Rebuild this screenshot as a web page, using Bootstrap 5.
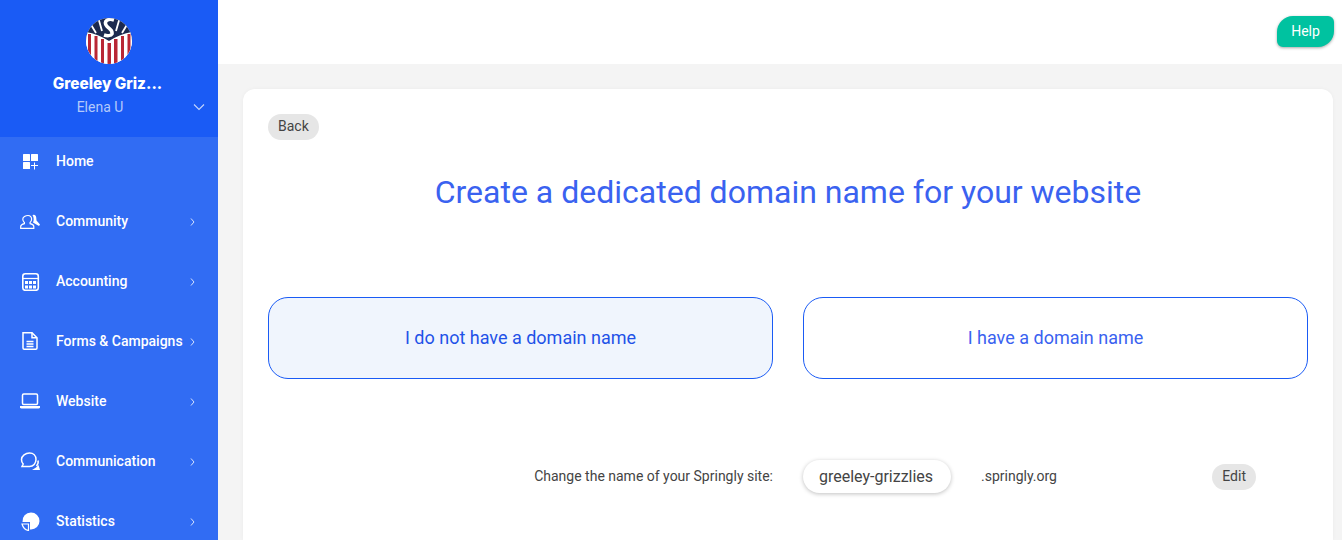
<!DOCTYPE html>
<html lang="en">
<head>
  <meta charset="UTF-8">
  <title>Domain name</title>
  <link href="https://cdn.jsdelivr.net/npm/bootstrap@5.3.0/dist/css/bootstrap.min.css" rel="stylesheet">
  <style>
    html, body { height: 540px; overflow: hidden; }
    body { font-family: Roboto, "Liberation Sans", sans-serif; background: #f4f4f4; color: #444; }
    .side-bar { width: 218px; height: 540px; background: #316cf3; color: #fff; overflow: hidden; }
    .side-head { height: 137px; background: #1a5bf5; padding-top: 17px; position: relative; }
    .club-logo { width: 46px; height: 48px; display: block; margin: 0 auto; }
    .club-name { font-family: Inter, "Liberation Sans", sans-serif; font-weight: 800; font-size: 15.3px; line-height: 20px; margin-top: 9px; text-align: center; margin-right: 3px; }
    .user-name { font-size: 14px; line-height: 18px; color: #b3c9fb; text-align: center; margin-top: 4px; margin-right: 18px; }
    .user-caret { position: absolute; left: 193px; top: 103px; width: 12px; height: 8px; }
    .menu-item { height: 60px; padding: 0 21px 0 20px; color: #fff; text-decoration: none; font-size: 14px; font-weight: 500; }
    .menu-first { height: 54px; padding-bottom: 6px; }
    .menu-last { height: 49px; padding-top: 11px; }
    .menu-icon { width: 20px; height: 20px; margin-right: 16px; flex: none; }
    .menu-arrow { width: 5px; height: 8px; flex: none; margin: 1px 2px 0 0; }
    .menu-label { white-space: nowrap; }
    .top-bar { height: 64px; background: #fff; padding: 16px 8px 0 0; }
    .help-btn { width: 57px; height: 31px; background: #00c2a0; color: #fff; font-size: 14px; border: 0; padding: 0; border-radius: 16px 6px 16px 6px; box-shadow: 0 1px 3px rgba(0,0,0,.35); }
    .content-wrap { padding: 25px 9px 0 25px; }
    .white-panel { background: #fff; border-radius: 12px 12px 0 0; height: 451px; padding: 25px; box-shadow: 0 0 4px rgba(0,0,0,.04); }
    .pill-btn { background: #e6e6e6; color: #444; border: 0; font-size: 14px; line-height: 18px; padding: 3px 10px 5px; border-radius: 13px; display: block; }
    .page-title { color: #3a62f0; font-size: 32px; font-weight: 400; line-height: 38px; text-align: center; margin: 33px 0 86px; }
    .choice-row { display: grid; grid-template-columns: 505px 505px; gap: 30px; }
    .choice-box { height: 82px; border: 1px solid #1a5bf5; border-radius: 20px; background: #fff; color: #3a62f0; font-size: 18px; padding-bottom: 2px; }
    .choice-on { background: #f0f5fd; color: #1f52e8; }
    .site-row { display: grid; grid-template-columns: 505px 148px 1fr; column-gap: 30px; margin-top: 81px; align-items: center; height: 33px; font-size: 14px; }
    .site-label { text-align: right; }
    .site-input { height: 33px; border-radius: 17px; background: #fff; box-shadow: 0 1px 4px rgba(0,0,0,.25); font-size: 16px; padding-right: 2px; }
    .site-edit { margin-right: 52px; }
  </style>
</head>
<body class="d-flex">
  <nav class="side-bar flex-shrink-0">
    <div class="side-head">
      <svg class="club-logo" viewBox="0 0 46 48">
        <defs><clipPath id="logoClip"><circle cx="23" cy="24" r="23"/></clipPath></defs>
        <g clip-path="url(#logoClip)">
          <rect width="46" height="48" fill="#fff"/>
          <rect y="0" width="46" height="24" fill="#1c2a4f"/>
          <path d="M4 6l6 10M12 0l4 14M34 0l-4 14M42 6l-6 10" stroke="#fff" stroke-width="1.800" fill="none"/>
          <path d="M28 3C22 1 18 4 20 8C22 12 27 12 26 17C25 19 21 19 18 18" stroke="#fff" stroke-width="3.500" fill="none"/>
          <path d="M0 15Q12 17 23 24Q34 17 46 15V48H0Z" fill="#fff"/>
          <g fill="#b92735">
            <rect x="2" y="17" width="3" height="31"/>
            <rect x="8.500" y="19" width="3" height="29"/>
            <rect x="15" y="22" width="3" height="26"/>
            <rect x="21.500" y="26" width="3.500" height="22"/>
            <rect x="28" y="22" width="3.500" height="26"/>
            <rect x="35" y="19" width="3" height="29"/>
            <rect x="41.500" y="17" width="3" height="31"/>
          </g>
        </g>
      </svg>
      <div class="club-name">Greeley Griz...</div>
      <div class="user-name">Elena U</div>
      <svg class="user-caret" viewBox="0 0 12 8"><path d="M1 1.500l5 5 5-5" stroke="#c5d6fc" stroke-width="1.100" fill="none"/></svg>
    </div>

    <a href="#" class="menu-item menu-first d-flex align-items-center">
      <svg class="menu-icon" viewBox="0 0 20 20" fill="#fff"><rect x="3" y="3" width="7" height="7" rx=".5"/><rect x="11" y="3" width="7" height="7" rx=".5"/><rect x="3" y="11" width="7" height="7" rx=".5"/><path d="M14 11.500h1V14h3v1h-3v3.500h-1V15h-3v-1h3z"/></svg>
      <span class="menu-label flex-grow-1">Home</span>
    </a>
    <a href="#" class="menu-item d-flex align-items-center">
      <svg class="menu-icon" viewBox="0 0 20 20" fill="none" stroke="#fff" stroke-width="1.200"><path d="M8 4.500c2.300 0 3.800 1.700 3.600 3.700-.1 1.500-.8 2.700-1.500 3.300v1.200c2 .5 3.700 1.300 3.700 2.800v1.800H.7v-1.800c0-1.500 1.800-2.300 3.700-2.800v-1.200c-.8-.6-1.500-1.800-1.600-3.300C2.600 6.200 5.700 4.500 8 4.500z"/><path d="M13 4c1.700-.5 3 .5 3.200 2.200l.3 3.300 3.500 4-1 1.500-3.500-2-2.500-1.500c1-2 1-5-.5-7.500z" fill="#fff" stroke="none"/></svg>
      <span class="menu-label flex-grow-1">Community</span>
      <svg class="menu-arrow" viewBox="0 0 5 8"><path d="M1 .5l3 3.500-3 3.500" stroke="#d5e1fd" stroke-width="1" fill="none"/></svg>
    </a>
    <a href="#" class="menu-item d-flex align-items-center">
      <svg class="menu-icon" viewBox="0 0 20 20"><rect x="2.800" y="2.800" width="15.500" height="16.500" rx="2.500" fill="none" stroke="#fff" stroke-width="1.600"/><path d="M3 7.500h15" stroke="#fff" stroke-width="1.200"/><g fill="#fff"><rect x="5" y="10" width="3" height="3"/><rect x="9" y="10" width="3" height="3"/><rect x="13" y="10" width="3" height="3"/><rect x="5" y="14.500" width="3" height="3"/><rect x="9" y="14.500" width="3" height="3"/><rect x="13" y="14.500" width="3" height="3"/></g></svg>
      <span class="menu-label flex-grow-1">Accounting</span>
      <svg class="menu-arrow" viewBox="0 0 5 8"><path d="M1 .5l3 3.500-3 3.500" stroke="#d5e1fd" stroke-width="1" fill="none"/></svg>
    </a>
    <a href="#" class="menu-item d-flex align-items-center">
      <svg class="menu-icon" viewBox="0 0 20 20" fill="none" stroke="#fff" stroke-width="1.500"><path d="M3 1.800h9l5 5V17a1.200 1.200 0 0 1-1.200 1.200H4.200A1.200 1.200 0 0 1 3 17z"/><path d="M12 1.800v5h5M6.500 10.500h7M6.500 13h7M6.500 15.500h7"/></svg>
      <span class="menu-label flex-grow-1">Forms &amp; Campaigns</span>
      <svg class="menu-arrow" viewBox="0 0 5 8"><path d="M1 .5l3 3.500-3 3.500" stroke="#d5e1fd" stroke-width="1" fill="none"/></svg>
    </a>
    <a href="#" class="menu-item d-flex align-items-center">
      <svg class="menu-icon" viewBox="0 0 20 20"><rect x="2.500" y="3" width="15" height="10.500" rx="1.200" fill="none" stroke="#fff" stroke-width="1.500"/><path d="M-.5 15h21c0 1.500-.8 2.500-2 2.500H1.500c-1.200 0-2-1-2-2.500z" fill="#fff"/></svg>
      <span class="menu-label flex-grow-1">Website</span>
      <svg class="menu-arrow" viewBox="0 0 5 8"><path d="M1 .5l3 3.500-3 3.500" stroke="#d5e1fd" stroke-width="1" fill="none"/></svg>
    </a>
    <a href="#" class="menu-item d-flex align-items-center">
      <svg class="menu-icon" viewBox="0 0 20 20" fill="none" stroke="#fff" stroke-width="1.500"><path d="M9.500 2c3.800 0 6.500 2.700 6.500 6.500s-2.700 7-6.500 7H2l1.200-2.500C2 11.800 1.500 10.300 1.500 8.500 1.500 4.700 5.700 2 9.500 2z"/><path d="M18 9.500c.5 2-.1 4-1.500 5.500"/><path d="M12 19h8l-1.500-5-2.500 2.500z" fill="#fff" stroke="none"/></svg>
      <span class="menu-label flex-grow-1">Communication</span>
      <svg class="menu-arrow" viewBox="0 0 5 8"><path d="M1 .5l3 3.500-3 3.500" stroke="#d5e1fd" stroke-width="1" fill="none"/></svg>
    </a>
    <a href="#" class="menu-item menu-last d-flex align-items-center">
      <svg class="menu-icon" viewBox="0 0 20 20"><path d="M11 1.500a8.500 8.500 0 1 1 0 17h-1V11H2.500A8.500 8.500 0 0 1 11 1.500z" fill="#fff"/><path d="M2 13h6.500v6.500c-3-.5-5.500-3-6.500-6.500z" fill="none" stroke="#fff" stroke-width="1.200"/></svg>
      <span class="menu-label flex-grow-1">Statistics</span>
      <svg class="menu-arrow" viewBox="0 0 5 8"><path d="M1 .5l3 3.500-3 3.500" stroke="#d5e1fd" stroke-width="1" fill="none"/></svg>
    </a>
  </nav>

  <div class="flex-grow-1">
    <div class="top-bar d-flex justify-content-end align-items-start">
      <button class="help-btn">Help</button>
    </div>
    <div class="content-wrap">
      <div class="white-panel">
        <button class="pill-btn">Back</button>
        <h1 class="page-title">Create a dedicated domain name for your website</h1>
        <div class="choice-row">
          <div class="choice-box choice-on d-flex align-items-center justify-content-center">I do not have a domain name</div>
          <div class="choice-box d-flex align-items-center justify-content-center">I have a domain name</div>
        </div>
        <div class="site-row">
          <div class="site-label">Change the name of your Springly site:</div>
          <div class="site-input d-flex align-items-center justify-content-center">greeley-grizzlies</div>
          <div class="d-flex align-items-center justify-content-between">
            <span>.springly.org</span>
            <button class="pill-btn site-edit">Edit</button>
          </div>
        </div>
      </div>
    </div>
  </div>
  <script src="https://cdn.jsdelivr.net/npm/bootstrap@5.3.0/dist/js/bootstrap.bundle.min.js"></script>
</body>
</html>
